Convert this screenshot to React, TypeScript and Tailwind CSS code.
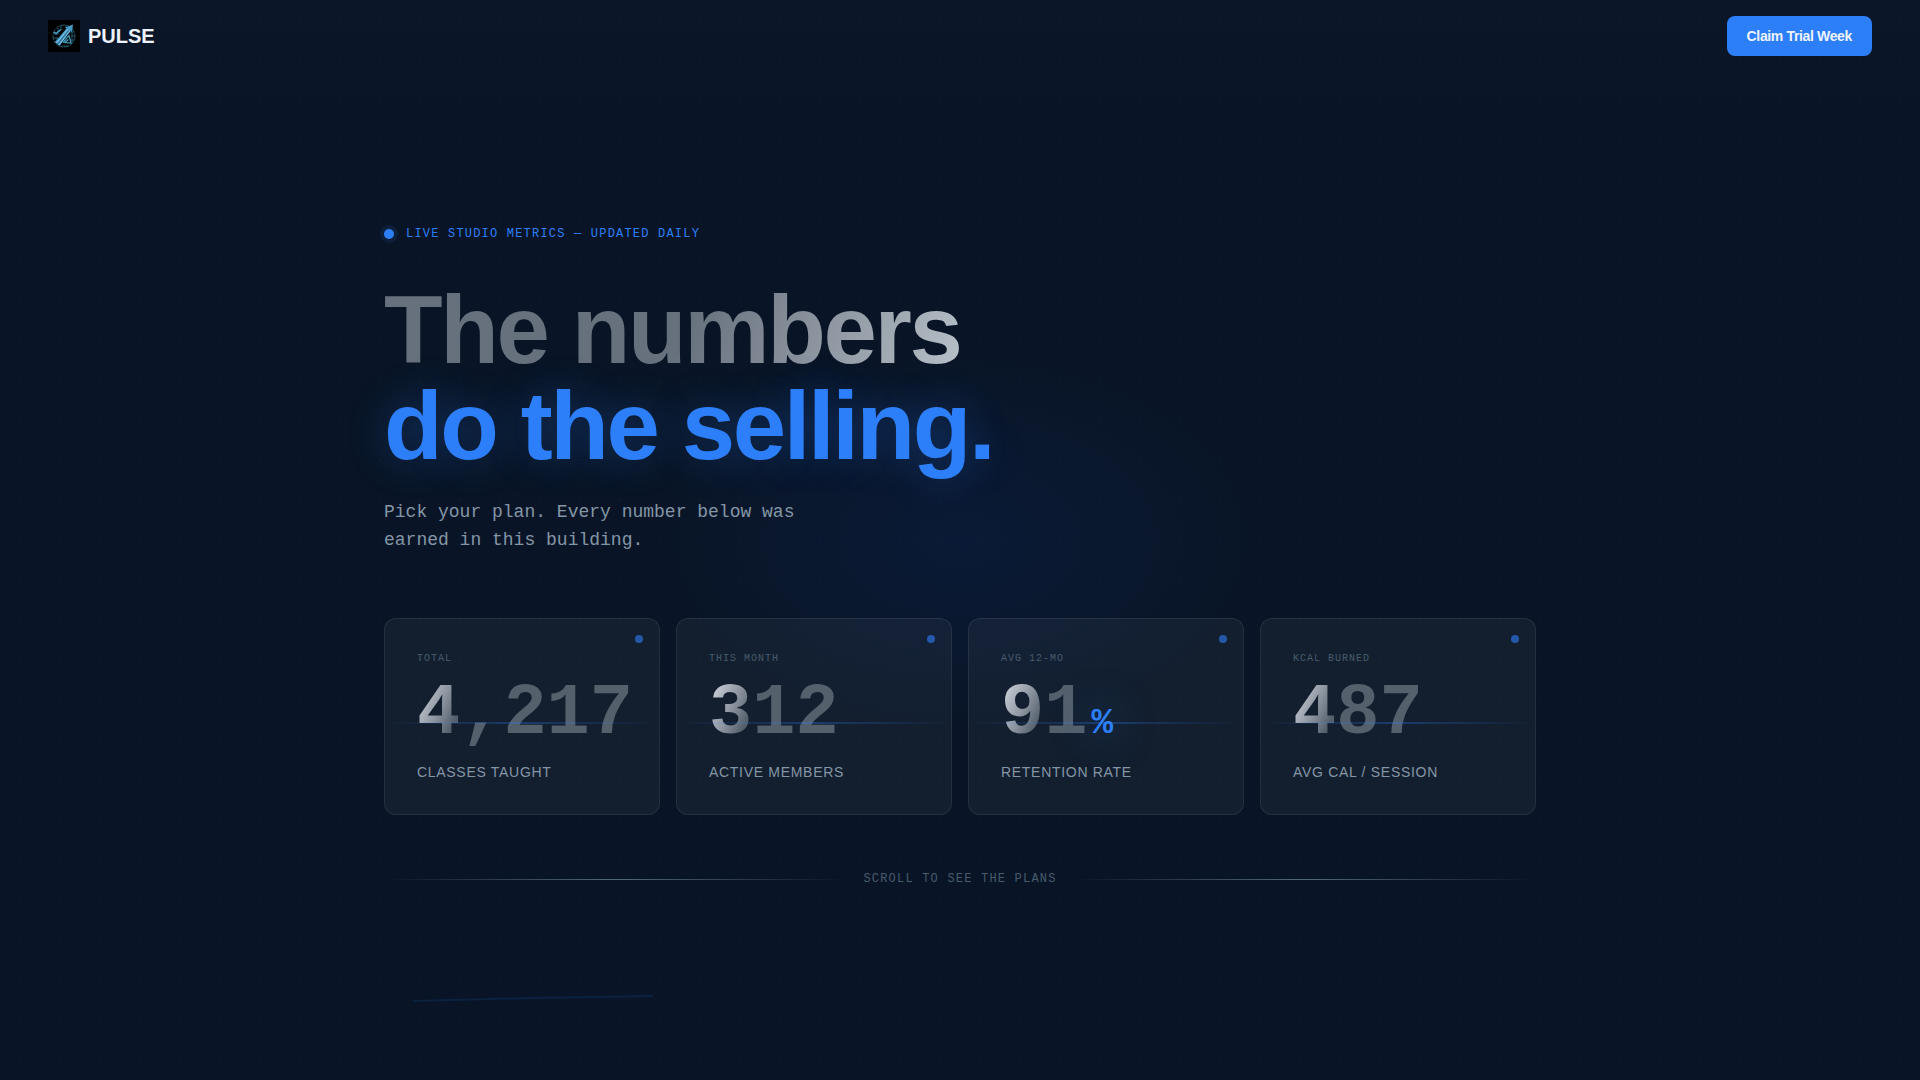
type Stat = {
  tag: string;
  value: string;
  suffix?: string;
  label: string;
};

const STATS: Stat[] = [
  { tag: "TOTAL", value: "4,217", label: "CLASSES TAUGHT" },
  { tag: "THIS MONTH", value: "312", label: "ACTIVE MEMBERS" },
  { tag: "AVG 12-MO", value: "91", suffix: "%", label: "RETENTION RATE" },
  { tag: "KCAL BURNED", value: "487", label: "AVG CAL / SESSION" },
];

function Logo() {
  return (
    <svg viewBox="0 0 32 32" className="size-8 bg-black" aria-hidden="true">
      <g fill="none" stroke="#23586c" strokeWidth="1">
        <circle cx="16" cy="16" r="11" strokeDasharray="5 1" />
        <path d="M5.500 14h6M5.500 18h5M7 22h3M21 12h5M23 16h4M22 20h4M13 5v5M10 8v4M18 5v3M24 12v10M14 26h7M9 18v4" />
      </g>
      <path d="M6 12l2 1.500 5-4" fill="none" stroke="#4aa6c8" strokeWidth="1.500" />
      <path d="M7 22L18.500 8.500l-1.500-1L25 4.500l-1 7.500-1.800-1.200L11.500 26z" fill="#4699c4" />
      <path d="M8.500 23L20 9M11 25L22 11" stroke="#8bcdf0" strokeWidth="0.900" />
      <path d="M9.800 24L20.500 10.500" stroke="#1c506c" strokeWidth="0.700" />
      <path d="M15 22.500l6-7 2 7.500-6-.5 3.500-3" fill="none" stroke="#459fc0" strokeWidth="1.200" />
    </svg>
  );
}

function Header() {
  return (
    <header className="flex items-center justify-between px-12 py-4">
      <a href="#top" className="flex items-center gap-2 text-xl font-bold text-[#eef3fb]">
        <Logo />
        <span>PULSE</span>
      </a>
      <button
        type="button"
        className="h-10 rounded-lg bg-[#2d7ff9] px-5 text-sm font-bold tracking-tight text-[#eef3fb] hover:bg-[#4a91fa]"
      >
        Claim Trial Week
      </button>
    </header>
  );
}

function StatCard({ tag, value, suffix, label }: Stat) {
  return (
    <li className="relative overflow-hidden rounded-xl border border-white/8 bg-white/[0.045] p-8">
      <span className="absolute top-4 right-4 size-2 rounded-full bg-[#2d7ff9]/60" />
      <p className="mb-3 font-['Liberation_Mono',monospace] text-[10px] leading-[15px] tracking-widest text-[#475b6b]">
        {tag}
      </p>
      <p className="flex items-baseline gap-1 font-['Liberation_Mono',monospace] text-7xl leading-none font-bold">
        <span className="bg-[linear-gradient(115deg,#c9ced6_8px,#8f97a2_32px,#55606d_52px)] bg-clip-text text-transparent">
          {value}
        </span>
        {suffix && (
          <span className="text-4xl leading-none text-[#2d7ff9] [text-shadow:0_0_40px_rgba(45,127,249,0.5)]">
            {suffix}
          </span>
        )}
      </p>
      <p className="mt-3 text-sm tracking-wider text-[#8496a6]">{label}</p>
      {/* Scan line */}
      <span className="absolute inset-x-0 top-[53%] h-0.5 bg-[linear-gradient(90deg,transparent,rgba(45,127,249,0.3),transparent)]" />
    </li>
  );
}

function Rule() {
  return <span className="h-px flex-1 bg-[linear-gradient(90deg,transparent,#536878,transparent)]" />;
}

export default function App() {
  return (
    <div
      id="top"
      className="relative isolate flex min-h-screen flex-col overflow-hidden bg-[#091526] font-['Liberation_Sans',Arial,sans-serif]"
    >
      {/* Backdrop */}
      <div className="absolute inset-x-0 top-0 -z-10 h-32 bg-linear-to-b from-[#0b1728] to-transparent" />
      <div className="absolute inset-0 -z-10 bg-[radial-gradient(circle,rgba(45,127,249,0.04)_1px,transparent_1px)] bg-size-[40px_40px]" />
      <div className="absolute top-1/2 left-1/2 -z-10 h-[500px] w-[800px] -translate-x-1/2 -translate-y-1/2 bg-[radial-gradient(ellipse_at_center,rgba(20,60,160,0.13),transparent_55%)]" />
      <svg
        viewBox="0 0 240 8"
        className="absolute top-[994px] left-[413px] -z-10 w-60"
        aria-hidden="true"
      >
        <path d="M0 7L120 4L240 2" fill="none" stroke="#0c2140" strokeWidth="2" />
      </svg>

      <Header />

      <main className="mx-auto w-full max-w-6xl flex-1 pt-[154px] pb-24">
        <p className="mb-10 flex items-center gap-3 font-['Liberation_Mono',monospace] text-xs tracking-widest text-[#2d7ff9]">
          <span className="size-2.5 rounded-full bg-[#2d7ff9] shadow-[0_0_0_4px_rgba(45,127,249,0.1)]" />
          LIVE STUDIO METRICS — UPDATED DAILY
        </p>

        <h1 className="mb-6 text-8xl leading-none font-bold tracking-tight">
          <span className="block w-fit bg-[linear-gradient(110deg,#67717d_52%,#8f97a2_76%,#b8c0c9_100%)] bg-clip-text text-transparent">
            The numbers
          </span>
          <span className="block text-[#2d7ff9] [text-shadow:0_0_40px_rgba(45,127,249,0.3)]">
            do the selling.
          </span>
        </h1>

        <p className="mb-16 max-w-md font-['Liberation_Mono',monospace] text-lg text-[#8496a6]">
          Pick your plan. Every number below was earned in this building.
        </p>

        <ul className="grid grid-cols-2 gap-4 lg:grid-cols-4">
          {STATS.map((s) => (
            <StatCard key={s.tag} {...s} />
          ))}
        </ul>

        <div className="mt-14 flex items-center gap-4 font-['Liberation_Mono',monospace] text-xs tracking-widest text-[#475b6b]">
          <Rule />
          <span>SCROLL TO SEE THE PLANS</span>
          <Rule />
        </div>
      </main>
    </div>
  );
}
